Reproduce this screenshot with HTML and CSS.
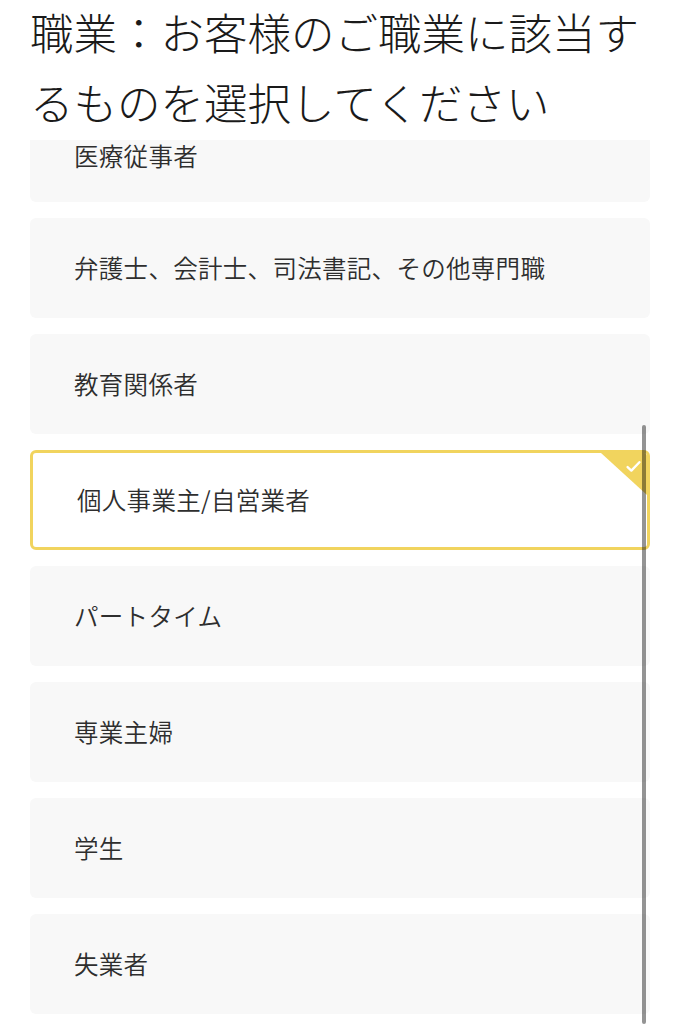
FILE: index.html
```html
<!DOCTYPE html>
<html lang="ja">
<head>
<meta charset="utf-8">
<title>職業選択</title>
<link rel="stylesheet" href="styles.css">
</head>
<body>
<div class="page">
  <header class="header">
    <h1 class="title">職業：お客様のご職業に該当するものを選択してください</h1>
  </header>
  <div class="viewport">
    <ul class="list">
      <li class="card card--first"><span class="label">医療従事者</span></li>
      <li class="card"><span class="label">弁護士、会計士、司法書記、その他専門職</span></li>
      <li class="card"><span class="label">教育関係者</span></li>
      <li class="card card--selected"><span class="label">個人事業主/自営業者</span>
        <span class="badge">
          <svg class="check" viewBox="0 0 14 12" width="15" height="13"><path d="M1.5 6.5 L5 9.8 L12.5 2" fill="none" stroke="#fff" stroke-width="2.2" stroke-linecap="round" stroke-linejoin="round"/></svg>
        </span>
      </li>
      <li class="card"><span class="label">パートタイム</span></li>
      <li class="card"><span class="label">専業主婦</span></li>
      <li class="card"><span class="label">学生</span></li>
      <li class="card"><span class="label">失業者</span></li>
    </ul>
    <div class="scrollbar"></div>
  </div>
</div>
</body>
</html>
```

FILE: styles.css
```css
html, body {
  margin: 0;
  padding: 0;
  background: #ffffff;
}
body {
  width: 680px;
  height: 1024px;
  overflow: hidden;
  font-family: "Noto Sans CJK JP", "Noto Sans", sans-serif;
  color: #222222;
}
.page {
  display: flex;
  flex-direction: column;
  height: 1024px;
}
.header {
  height: 140px;
  flex: 0 0 140px;
  padding: 0 30px;
  background: #ffffff;
  box-sizing: border-box;
}
.title {
  margin: -3px 0 0 0;
  font-size: 43.5px;
  line-height: 70px;
  font-weight: 300;
  color: #1a1a1a;
  letter-spacing: 0;
}
.viewport {
  flex: 1;
  overflow: hidden;
  position: relative;
}
.list {
  list-style: none;
  margin: 0;
  padding: 0 30px;
  display: flex;
  flex-direction: column;
  gap: 16px;
}
.card {
  position: relative;
  height: 100px;
  box-sizing: border-box;
  display: flex;
  align-items: center;
  padding-left: 44px;
  background: #f8f8f8;
  border-radius: 6px;
  font-size: 24.5px;
  line-height: 1;
  font-weight: 350;
  color: #2e2e2e;
  letter-spacing: 0.3px;
  overflow: hidden;
}
/* first card is scrolled partly under the header: only its lower part shows */
.card--first {
  height: 62px;
  align-items: flex-start;
  padding-top: 3px;
  border-radius: 0 0 6px 6px;
}
.label {
  display: block;
  line-height: 1.1;
}
.card--selected {
  background: #ffffff;
  border: 3px solid #f1d45e;
}
.badge {
  position: absolute;
  top: 0;
  right: 0;
  width: 46px;
  height: 42px;
  background: #f1d45e;
  clip-path: polygon(0 0, 100% 0, 100% 100%);
}
.check {
  position: absolute;
  top: 7px;
  right: 6px;
}
.scrollbar {
  position: absolute;
  left: 642px;
  top: 285px;
  bottom: 0;
  width: 4px;
  border-radius: 2px;
  background: rgba(0, 0, 0, 0.42);
}
```
